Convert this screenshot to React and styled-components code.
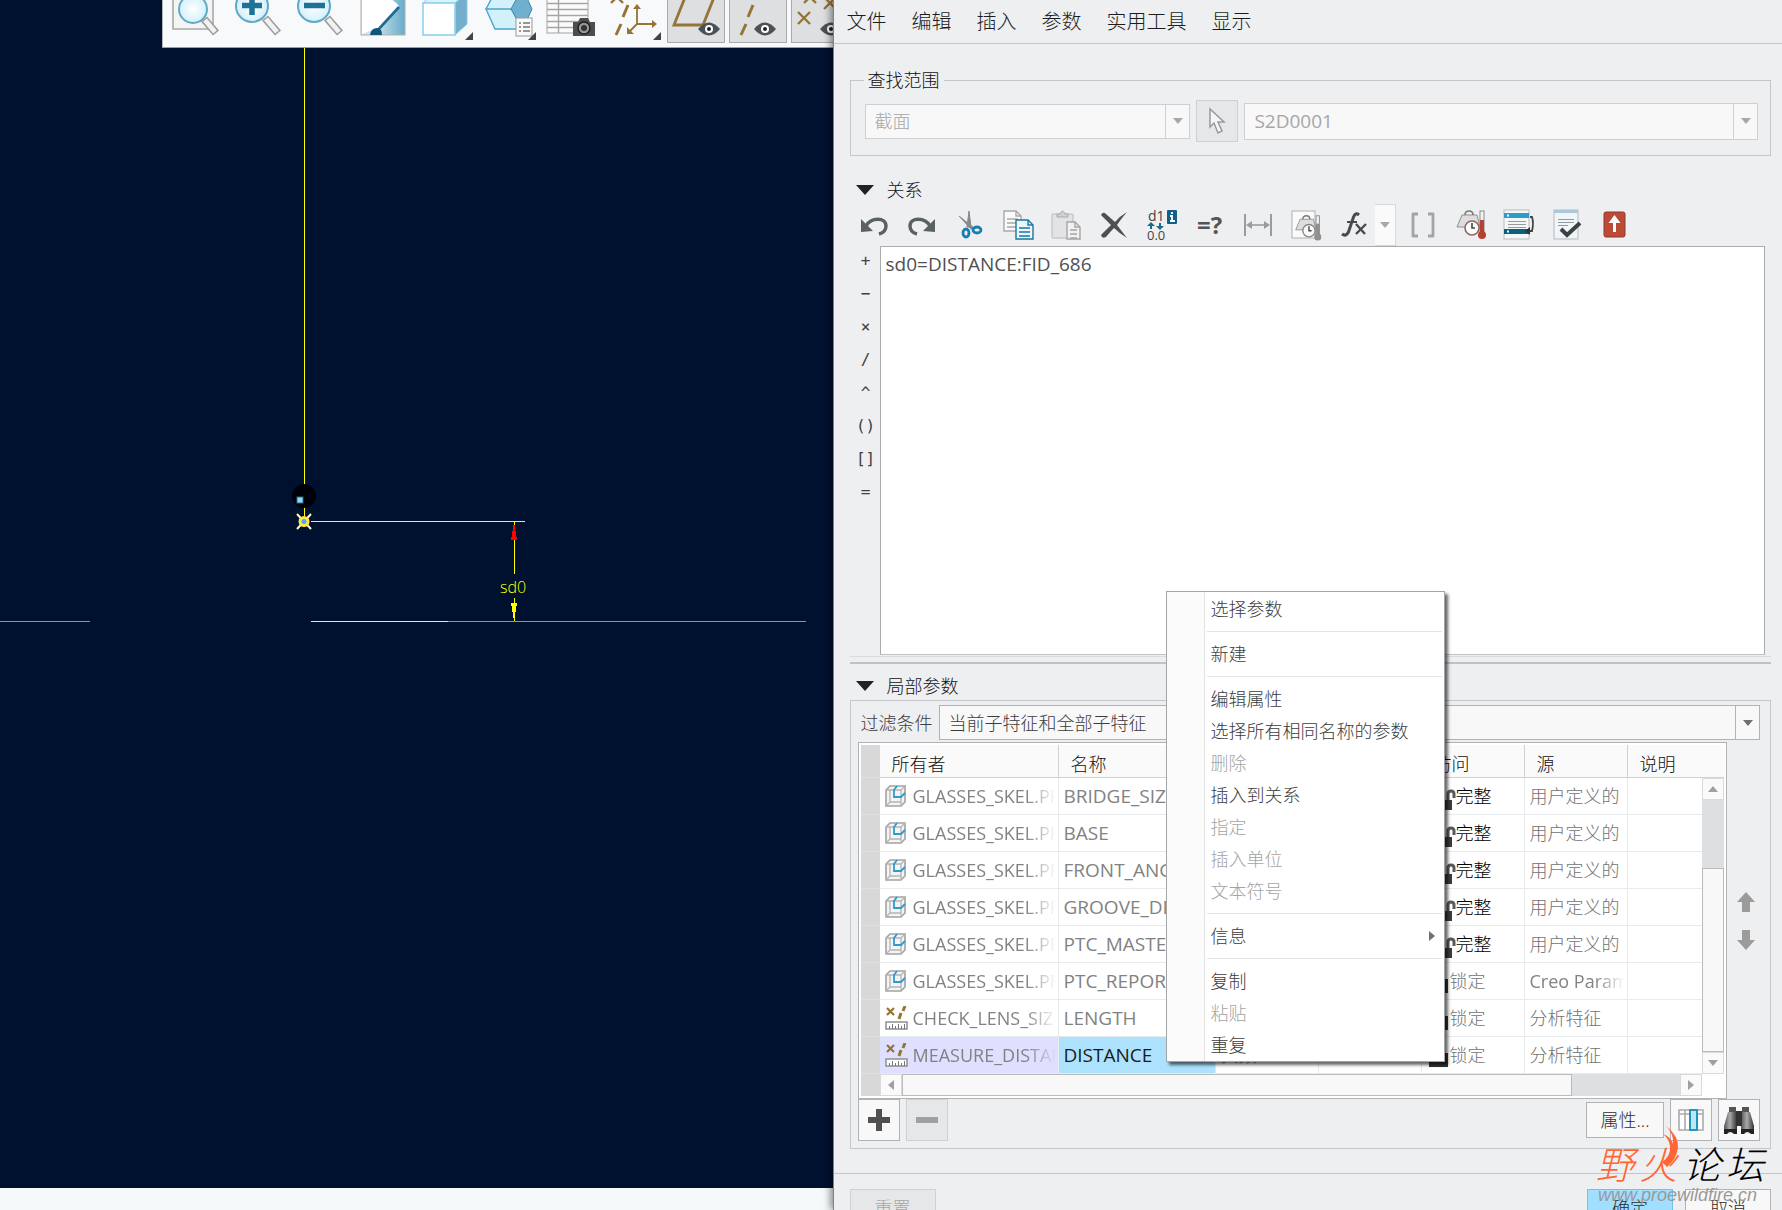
import React, { useState } from 'react';
import styled, { createGlobalStyle, css } from 'styled-components';

const sans = `"Open Sans", "Noto Sans CJK SC", sans-serif`;

const GlobalStyle = createGlobalStyle`
  * {
    box-sizing: border-box;
  }
  body {
    margin: 0;
    background: #eeeff1;
    font-family: ${sans};
    font-size: 18px;
    font-weight: 300;
    line-height: 24px;
    color: #111;
  }
  button, select, textarea {
    font: inherit;
    color: inherit;
    margin: 0;
  }
`;

const Page = styled.main`
  display: flex;
  height: 100vh;
  overflow: hidden;
`;

/* ---------- model view ---------- */

const ModelView = styled.section`
  flex: 833 1 0;
  min-width: 0;
  display: flex;
  flex-direction: column;
  background: #00112f;
`;

const ViewBar = styled.div`
  display: flex;
  gap: 4px;
  height: 48px;
  margin-left: 162px;
  padding-left: 8px;
  overflow: hidden;
  background: #f8f9fb;
  border-left: 1px solid #b4b6b8;
  border-bottom: 1px solid #9b9da0;
`;

const ViewButton = styled.button`
  flex: 0 0 58px;
  min-width: 0;
  height: 43px;
  padding: 0;
  border: 1px solid ${(p) => (p.$on ? '#a9abad' : 'transparent')};
  border-top: none;
  background: ${(p) => (p.$on ? '#dedfe1' : 'transparent')};

  svg {
    display: block;
    margin-left: -1px;
  }
`;

const Scene = styled.svg`
  flex: 1;
  width: 100%;
  min-height: 0;
  display: block;
`;

const StatusStrip = styled.div`
  height: 22px;
  background: #f5f9fa;
`;

/* ---------- dialog ---------- */

const Dialog = styled.section`
  position: relative;
  flex: 949 1 0;
  min-width: 0;
  display: flex;
  flex-direction: column;
  background: #eeeff1;
  border-left: 1px solid #7d828b;
  box-shadow: -2px 0 8px rgba(0, 0, 0, 0.5);
`;

const MenuBar = styled.nav`
  display: flex;
  gap: 25px;
  height: 44px;
  padding: 0 13px;
  border-bottom: 1px solid #c4c6c9;
`;

const MenuButton = styled.button`
  padding: 0;
  border: none;
  background: none;
  font-size: 20px;
  color: #1c1c1c;
`;

const Body = styled.div`
  flex: 1;
  min-height: 0;
  display: flex;
  flex-direction: column;
  padding: 24px 11px 24px 16px;
`;

const Scope = styled.fieldset`
  display: flex;
  align-items: center;
  gap: 6px;
  min-width: 0;
  margin: 0;
  padding: 8px 12px 13px 14px;
  border: 1px solid #c4c6c9;

  legend {
    margin-left: -1px;
    padding: 0 4px;
  }
`;

const Combo = styled.div`
  display: flex;
  flex: ${(p) => p.$grow || 1} 1 0;
  min-width: 0;
  height: ${(p) => (p.$tall ? 37 : 35)}px;
  background: #f8f8f8;
  border: 1px solid ${(p) => (p.$off ? '#cfd0d2' : '#b0b2b5')};
  color: ${(p) => (p.$off ? '#a6a6a6' : '#3c3c3c')};
  ${(p) => p.$latin && css`
    font-size: 19px;
    font-weight: 400;
  `}

  select {
    flex: 1;
    min-width: 0;
    padding: 0 9px;
    border: none;
    border-radius: 0;
    background: transparent;
    appearance: none;
    opacity: 1;
  }
`;

const ComboArrow = styled.span`
  display: flex;
  align-items: center;
  justify-content: center;
  width: 24px;
  border-left: 1px solid ${(p) => (p.$off ? '#cfd0d2' : '#b0b2b5')};
`;

const SquareButton = styled.button`
  display: flex;
  align-items: center;
  justify-content: center;
  flex: 0 0 42px;
  height: 42px;
  padding: 0;
  border: 1px solid ${(p) => (p.$off ? '#cfd0d2' : '#b0b2b5')};
  background: ${(p) => (p.$off ? '#e6e7e9' : '#f8f8f8')};
`;

const SectionTitle = styled.h2`
  display: flex;
  align-items: center;
  gap: 13px;
  margin: ${(p) => p.$top}px 0 2px;
  padding-left: 6px;
  font-size: 18px;
  font-weight: 300;
  line-height: 24px;
`;

const ToolBar = styled.div`
  display: flex;
  height: 42px;
`;

const ToolButton = styled.button`
  display: flex;
  align-items: center;
  justify-content: center;
  flex: 0 0 48px;
  padding: 0;
  border: none;
  background: none;
`;

const ToolArrow = styled(ToolButton)`
  flex-basis: 21px;
  margin: 0 3px 0 -3px;
  background: #fafafa;
  border: 1px solid #d5d9dd;
  border-left: none;
`;

const EditorRow = styled.div`
  flex: 1;
  min-height: 0;
  display: flex;
  padding-right: 6px;
`;

const Operators = styled.div`
  width: 30px;
  padding-left: 2px;
  display: flex;
  flex-direction: column;
`;

const OperatorButton = styled.button`
  height: 33px;
  padding: 0 0 4px;
  border: none;
  background: none;
  font-family: "DejaVu Sans Mono", monospace;
  font-size: 16px;
  line-height: 24px;
  color: #404040;
`;

const Editor = styled.textarea`
  flex: 1;
  min-width: 0;
  padding: 5px;
  border: 1px solid #a9abae;
  border-bottom-color: #c0c4c9;
  outline: none;
  resize: none;
  background: #fff;
  color: #505050;
  font-size: 19px;
  font-weight: 400;
`;

const Splitter = styled.hr`
  width: 100%;
  height: 8px;
  margin: 1px 0 0;
  border: none;
  border-top: 1px solid #d9dcdf;
  border-bottom: 2px solid #c0c2c4;
`;

const ParamBox = styled.div`
  display: flex;
  flex-direction: column;
  padding: 4px 10px 7px 7px;
  border: 1px solid #c4c6c9;
`;

const FilterRow = styled.div`
  display: flex;
  align-items: center;
  gap: 6px;
  padding-left: 3px;
  margin-bottom: 2px;
  color: #3c3c3c;
`;

const TableRow = styled.div`
  display: flex;
`;

const TableFrame = styled.div`
  flex: 1;
  min-width: 0;
  display: flex;
  padding: 2px;
  background: #fff;
  border: 1px solid #b0b2b5;
`;

const Grid = styled.div`
  flex: 1;
  min-width: 0;
`;

const Table = styled.table`
  width: 100%;
  table-layout: fixed;
  border-spacing: 0;

  th, td {
    padding: 0;
    overflow: hidden;
    white-space: nowrap;
    text-align: left;
    font-weight: 300;
  }
  th {
    height: 33px;
    padding: 5px 12px 0;
    background: #fafafa;
    border-right: 1px solid #d0d2d4;
    border-bottom: 1px solid #d0d2d4;
  }
  td {
    height: 37px;
    padding-left: 5px;
    border-right: 1px solid #e8ebee;
    border-bottom: 1px solid #e8ebee;
    color: #727272;
  }
  th:last-child, td:last-child {
    border-right: none;
  }
  th:first-child, td:first-child {
    background: #d8d8d8;
    border-right: none;
    border-color: #e0e0e0;
  }
`;

const Cell = styled.td`
  ${(p) => p.$tint && css`
    background: ${p.$tint};
  `}
`;

const CellBody = styled.div`
  display: flex;
  align-items: center;
  gap: ${(p) => p.$gap || 0}px;
  overflow: hidden;
  color: ${(p) => p.$color || 'inherit'};
  margin-right: 2px;
  ${(p) => p.$latin && css`
    color: ${p.$color || '#828282'};
    font-size: ${p.$latin}px;
    font-weight: 400;
  `}
  ${(p) => p.$fade && css`
    mask-image: linear-gradient(to right, #000 calc(100% - 30px), transparent);
  `}

  svg {
    flex: none;
  }
`;

const HBar = styled.div`
  display: flex;
  height: 22px;
  background: #dddfe1;
`;

const HHandle = styled.div`
  width: 19px;
  background: #d8d8d8;
`;

const ScrollButton = styled.button`
  display: flex;
  align-items: center;
  justify-content: center;
  flex: 0 0 22px;
  padding: 0;
  border: 1px solid #d8dadc;
  background: #fafafa;
`;

const Thumb = styled.div`
  flex: ${(p) => p.$size} 1 0;
  background: #f8f8f8;
  border: 1px solid #b8babc;
`;

const Track = styled.div`
  flex: ${(p) => p.$size} 1 0;
`;

const VSide = styled.div`
  display: flex;
  flex-direction: column;
  width: 22px;
`;

const VHead = styled.div`
  height: 33px;
  background: #fafafa;
  border-bottom: 1px solid #d0d2d4;
`;

const VBar = styled.div`
  display: flex;
  flex-direction: column;
  height: 296px;
  background: #dddfe1;
`;

const Movers = styled.div`
  display: flex;
  flex-direction: column;
  align-items: center;
  justify-content: center;
  gap: 18px;
  width: 33px;
  padding-left: 4px;
`;

const MoveButton = styled.button`
  display: block;
  padding: 0;
  border: none;
  background: none;
  line-height: 0;
`;

const ActionRow = styled.div`
  display: flex;
  align-items: center;
  gap: 6px;
`;

const PushButton = styled.button`
  width: 86px;
  height: 38px;
  padding: 0;
  border: 1px solid ${(p) => (p.$main ? '#6cc4ec' : p.$off ? '#cfd0d2' : '#b0b2b5')};
  background: ${(p) => (p.$main ? '#a0dfff' : p.$off ? '#e6e7e9' : '#f8f8f8')};
  color: ${(p) => (p.$off ? '#a6a6a6' : '#2c2c2c')};
`;

const PropsButton = styled(PushButton)`
  width: 78px;
  height: 36px;
  margin-left: auto;
`;

const Footer = styled.footer`
  flex: none;
  display: flex;
  gap: 12px;
  height: 37px;
  padding: 15px 11px 0 16px;
  overflow: hidden;
  border-top: 1px solid #c4c6c9;

  ${PushButton}:first-child {
    margin-right: auto;
  }
`;

/* ---------- popup menu ---------- */

const Popup = styled.ul`
  position: absolute;
  left: 332px;
  top: 591px;
  width: 279px;
  margin: 0;
  padding: 1px 0 0;
  list-style: none;
  border: 1px solid #a4a6a8;
  background: linear-gradient(to right, #fbfbfb 37px, #e2e2e2 37px, #e2e2e2 38px, #fff 38px);
  box-shadow: 3px 3px 3px rgba(0, 0, 0, 0.6);
`;

const PopupButton = styled.button`
  display: flex;
  align-items: center;
  justify-content: space-between;
  width: 100%;
  height: 32px;
  padding: 0 9px 0 44px;
  border: none;
  background: none;
  color: ${(p) => (p.disabled ? '#a4a4a4' : '#3c3c3c')};
`;

const PopupLine = styled.li`
  height: 1px;
  margin: 6px 2px 6px 40px;
  background: #e2e4e6;
`;

const Watermark = styled.div`
  position: absolute;
  right: 18px;
  bottom: 5px;
  width: 168px;
  pointer-events: none;
  font-style: italic;
  font-family: "Liberation Sans", "Noto Sans CJK SC", sans-serif;

  svg {
    position: absolute;
    left: 66px;
    top: -21px;
  }
`;

const MarkName = styled.div`
  display: flex;
  justify-content: space-between;
  font-size: 38px;
  line-height: 38px;
  color: #000;
`;

const MarkUrl = styled.div`
  padding-left: 2px;
  font-size: 18px;
  line-height: 20px;
  font-weight: 400;
  color: #9a9a9a;
`;

const Orange = styled.span`
  color: #ff6633;
`;

/* ---------- drawings ---------- */

const Caret = ({ dir = 'down', color = '#707070', w = 10, h = 6 }) => {
  const shapes = {
    down: `0,0 ${w},0 ${w / 2},${h}`,
    up: `0,${h} ${w},${h} ${w / 2},0`,
    left: `${h},0 ${h},${w} 0,${w / 2}`,
    right: `0,0 0,${w} ${h},${w / 2}`,
  };
  const flat = dir === 'down' || dir === 'up';
  return (
    <svg width={flat ? w : h} height={flat ? h : w} aria-hidden="true">
      <polygon points={shapes[dir]} fill={color} />
    </svg>
  );
};

const Lens = ({ x, y, r }) => (
  <>
    <path d={`M${x + r - 3} ${y + r - 4} L45 33`} stroke="#9b9b9b" strokeWidth="8" />
    <path d={`M${x + r - 2} ${y + r - 3} L44 32`} stroke="#f1f1f1" strokeWidth="5" />
    <circle cx={x} cy={y} r={r} fill="url(#lens)" stroke="#5fa9c6" strokeWidth="2" />
  </>
);

const Corner = ({ x }) => <path d={`M${x} 40 h8 v-8 z`} fill="#444" />;

const Eye = ({ x }) => (
  <g>
    <path d={`M${x - 11} 29 q11 -13 22 0 q-11 13 -22 0z`} fill="#4b5255" />
    <circle cx={x} cy="29" r="4" fill="#fff" />
    <circle cx={x} cy="29" r="2" fill="#222" />
  </g>
);

const Cross = ({ x, y, s = 6 }) => (
  <path
    d={`M${x - s} ${y - s} l${2 * s} ${2 * s} M${x + s} ${y - s} l${-2 * s} ${2 * s}`}
    stroke="#957436"
    strokeWidth="2.4"
  />
);

const viewIcons = [
  {
    name: '重新调整',
    art: (
      <>
        <path d="M2 -4 H42 V29 H2z" fill="#f4f4f5" stroke="#a8a8a8" strokeWidth="1.6" />
        <Lens x={22} y={9} r={14} />
      </>
    ),
  },
  {
    name: '放大',
    art: (
      <>
        <Lens x={19} y={6} r={16} />
        <path d="M9 5.5 H29 M19 -4 V15" stroke="#1c7397" strokeWidth="5.5" />
      </>
    ),
  },
  {
    name: '缩小',
    art: (
      <>
        <Lens x={19} y={6} r={16} />
        <path d="M9 5.5 H30" stroke="#1c7397" strokeWidth="5.5" />
      </>
    ),
  },
  {
    name: '重画',
    art: (
      <>
        <rect x="4" y="-6" width="44" height="41" fill="url(#paint)" stroke="#b0b0b0" />
        <path d="M5 -6 H18 Q34 -4 42 6 L20 30 H15 L5 34z" fill="#fff" />
        <path d="M42 7 L20 31" stroke="#1d6d92" strokeWidth="2.6" />
        <path d="M13 35 q1 -7 7 -7 q5 0 5 7z" fill="#115577" />
      </>
    ),
  },
  {
    name: '显示样式',
    art: (
      <>
        <path d="M4 3 L14 -6 H48 L36 3z" fill="#d9f2fb" stroke="#7fcdea" />
        <path d="M36 3 L48 -6 V24 L36 35z" fill="#74aecb" stroke="#7fcdea" />
        <rect x="4" y="3" width="32" height="32" fill="#fff" stroke="#8ed3ee" strokeWidth="1.6" />
        <Corner x={46} />
      </>
    ),
  },
  {
    name: '已保存方向',
    art: (
      <>
        <path d="M5 9 L14 -8 H40 L32 9z M5 9 H32 L40 29 H14z" fill="#d3f1fc" stroke="#4da5c9" strokeWidth="1.4" />
        <path d="M30 9 L36 -2 H46 L51 9 L46 20 H36z" fill="#6fb0ce" stroke="#3a87ad" />
        <rect x="35" y="18" width="16" height="18" fill="#fafafa" stroke="#999" />
        <path d="M38 23 h2 m2 0 h7 M38 27 h2 m2 0 h7 M38 31 h2 m2 0 h7" stroke="#777" strokeWidth="1.3" />
        <Corner x={47} />
      </>
    ),
  },
  {
    name: '视图管理器',
    art: (
      <>
        <rect x="4" y="-6" width="41" height="39" fill="#fbfbfb" stroke="#a5a5a5" />
        <path d="M4 3.5 H45 M4 9.5 H45 M4 15.5 H45 M4 21.5 H45 M4 27.5 H45 M15.5 -6 V33" stroke="#a5a5a5" strokeWidth="1.4" />
        <path d="M30 22 h5 l2 -4 h8 l2 4 h5 v14 h-22z" fill="#4d4d4d" />
        <circle cx="41" cy="28" r="6" fill="#999" stroke="#222" strokeWidth="1.6" />
        <circle cx="41" cy="28" r="3" fill="#333" />
      </>
    ),
  },
  {
    name: '基准显示过滤器',
    art: (
      <>
        <Cross x={12} y={-3} />
        <path d="M23 5 L18 17 M16 24 L11 35" stroke="#957436" strokeWidth="3" />
        <path d="M32 6 V24 H50 M32 24 L23 33" fill="none" stroke="#957436" strokeWidth="1.8" />
        <path d="M28 9 L32 4 L36 9z M47 20 L52 24 L47 28z M22 27 V34 H29z" fill="#957436" />
        <Corner x={48} />
      </>
    ),
  },
  {
    name: '平面显示',
    on: true,
    art: (
      <>
        <path d="M19 -5 L7 25 H36 L48 -5" fill="none" stroke="#957436" strokeWidth="2.8" />
        <Eye x={42} />
      </>
    ),
  },
  {
    name: '轴显示',
    on: true,
    art: (
      <>
        <path d="M24 5 L19 17 M17 24 L12 35" stroke="#957436" strokeWidth="3" />
        <Eye x={36} />
      </>
    ),
  },
  {
    name: '点显示',
    on: true,
    art: (
      <>
        <Cross x={13} y={18} />
        <Cross x={19} y={-3} />
        <Cross x={39} y={3} />
        <Eye x={40} />
      </>
    ),
  },
];

const Defs = () => (
  <svg width="0" height="0" style={{ position: 'absolute' }} aria-hidden="true">
    <defs>
      <radialGradient id="lens">
        <stop offset="0" stopColor="#fff" />
        <stop offset="1" stopColor="#d3f0fa" />
      </radialGradient>
      <linearGradient id="paint" x1="0" y1="0" x2="1" y2="0">
        <stop offset="0.3" stopColor="#cfe6ef" />
        <stop offset="1" stopColor="#67abc8" />
      </linearGradient>
      <linearGradient id="metal" x1="0" y1="0" x2="1" y2="0">
        <stop offset="0" stopColor="#555" />
        <stop offset="0.45" stopColor="#aaa" />
        <stop offset="1" stopColor="#333" />
      </linearGradient>
    </defs>
  </svg>
);

const Sheet = ({ x, y, w, h, fill, line }) => (
  <g stroke={line} strokeWidth="1.4">
    <path d={`M${x} ${y} h${w - 5} l5 5 v${h - 5} h${-w}z`} fill={fill} />
    <path d={`M${x + w - 5} ${y} v5 h5`} fill="none" />
    <path d={`M${x + 3} ${y + 8} h${w - 6} m${6 - w} 4 h${w - 6} m${6 - w} 4 h${w - 6}`} fill="none" />
  </g>
);

const Scale = ({ dial, bulb, edge }) => (
  <g>
    <path d="M2 18 L7 6 H22 L25 18z" fill="#dcdedf" stroke="#8d8f91" />
    <path d="M10 6 q0 -4 4 -4 q4 0 4 4" fill="none" stroke="#777" strokeWidth="1.6" />
    <rect x="25" y="2" width="4" height="22" fill={edge} stroke="#8a8a8a" />
    <rect x="25" y="11" width="4" height="14" fill={bulb} />
    <circle cx="27" cy="26" r="4" fill={bulb} />
    <circle cx="17" cy="19" r="7" fill="#fbfbfb" stroke={dial} strokeWidth="1.6" />
    <path d="M17 14 V19 H20" fill="none" stroke="#444" strokeWidth="1.6" />
  </g>
);

const toolIcons = {
  undo: (
    <>
      <path d="M8 17 C13 8 28 8 28 17 C28 21 25 24 21 25" fill="none" stroke="#5a6164" strokeWidth="3.4" />
      <path d="M3 10 V23 L15 22z" fill="#5a6164" />
    </>
  ),
  redo: (
    <>
      <path d="M24 17 C19 8 4 8 4 17 C4 21 7 24 11 25" fill="none" stroke="#5a6164" strokeWidth="3.4" />
      <path d="M29 10 V23 L17 22z" fill="#5a6164" />
    </>
  ),
  cut: (
    <>
      <path d="M5 7 L20 19 L17 20z M15 2 L17 18 L13 18z" fill="#888" stroke="#888" />
      <ellipse cx="12" cy="24" rx="3" ry="4" fill="none" stroke="#1a7fb0" strokeWidth="2.8" />
      <ellipse cx="23" cy="21" rx="4" ry="3" fill="none" stroke="#1a7fb0" strokeWidth="2.8" />
    </>
  ),
  copy: (
    <>
      <Sheet x={2} y={2} w={17} h={20} fill="#fafafa" line="#a9a9a9" />
      <Sheet x={14} y={11} w={17} h={19} fill="#edf7fb" line="#1478a3" />
    </>
  ),
  paste: (
    <>
      <rect x="2" y="5" width="21" height="24" rx="1" fill="#e2e3e4" stroke="#b9babb" />
      <path d="M7 8 V5 H10 Q12.500 -1 15 5 H18 V8z" fill="#d0d1d2" stroke="#aaa" />
      <Sheet x={17} y={13} w={13} h={17} fill="#f1f1f1" line="#a5a5a5" />
    </>
  ),
  remove: (
    <path
      d="M3 6 Q5 2 8 5 L17 13 Q22 7 29 3 Q23 10 19 16 L29 29 Q21 24 16 19 Q12 23 8 28 Q4 30 3 26 Q8 21 13 16 Z"
      fill="#505050"
    />
  ),
  switchDim: (
    <>
      <text x="2" y="12" fontSize="14" fontWeight="400" fill="#444">d1</text>
      <text x="1" y="31" fontSize="13" fontWeight="400" fill="#444">0.0</text>
      <path d="M5 14 v6 M14 14 v6" stroke="#1a6a90" strokeWidth="2" />
      <path d="M1 17 l4 -4 l4 4z M10 17 l4 4 l4 -4z" fill="#1a6a90" />
      <rect x="21" y="1" width="10" height="14" rx="1" fill="#135f86" />
      <path d="M26 3 v2 M24 7 h2 v5 M24 12 h5" fill="none" stroke="#fff" strokeWidth="1.8" />
    </>
  ),
  evaluate: (
    <text x="3" y="25" fontSize="24" fontWeight="700" fill="#555">=?</text>
  ),
  dimension: (
    <>
      <path d="M3 5 V27 M29 5 V27" stroke="#9a9c9e" strokeWidth="2" />
      <path d="M6 16 H26" stroke="#9a9c9e" strokeWidth="1.6" />
      <path d="M4 16 l6 -4 v8z M28 16 l-6 -4 v8z" fill="#9a9c9e" />
    </>
  ),
  units: (
    <>
      <rect x="2" y="2" width="23" height="27" fill="#fafafa" stroke="#b0b0b0" />
      <g transform="translate(4 5) scale(0.880)">
        <Scale dial="#888" bulb="#909090" edge="#eee" />
      </g>
    </>
  ),
  fx: (
    <g fill="none" stroke="#4a4a4a">
      <path d="M4 25 Q8 28 10.500 23 L15.500 8 Q17.500 3 21 6" strokeWidth="3" />
      <path d="M9 13 H19" strokeWidth="2" />
      <path d="M18 15 L27 25 M28 15 L18 25" strokeWidth="2.4" />
    </g>
  ),
  brackets: (
    <path d="M11 5 H6 V27 H11 M21 5 H26 V27 H21" fill="none" stroke="#a2a4a5" strokeWidth="2.8" strokeLinejoin="round" />
  ),
  unitSense: <Scale dial="#8c6a5c" bulb="#b8402f" edge="#f3f3f3" />,
  order: (
    <>
      <rect x="1" y="1" width="25" height="29" fill="#f3f7f8" stroke="#bcbcbc" />
      <rect x="1" y="4" width="25" height="5" fill="#2c9cc8" />
      <rect x="1" y="20" width="25" height="5" fill="#0d5f80" />
      <path d="M4 6.500 h2 M4 22.500 h2" stroke="#fff" strokeWidth="2" />
      <path d="M5 12.500 H23 M5 15.500 H23 M5 18.500 H23" stroke="#999" />
      <path d="M27 8 h2 q2 6 0 14 h-5" fill="none" stroke="#444" strokeWidth="1.8" />
      <path d="M22 22 l5 -4 v8z" fill="#333" />
    </>
  ),
  verify: (
    <>
      <rect x="3" y="1" width="24" height="29" fill="#eff6f9" stroke="#b5b9bb" />
      <rect x="3" y="1" width="24" height="3" fill="#abc9d8" />
      <path d="M7 10.500 H23 M7 13.500 H23 M7 16.500 H17" stroke="#999" />
      <path d="M10 20 L16 26 L29 14" fill="none" stroke="#404040" strokeWidth="4" />
    </>
  ),
  exit: (
    <>
      <rect x="5" y="3" width="21" height="25" rx="2" fill="#bb4b36" stroke="#973524" />
      <path d="M15.500 23 V12" stroke="#fff" strokeWidth="3" />
      <path d="M9.500 14 L15.500 6 L21.500 14z" fill="#fff" />
    </>
  ),
};

const tools = [
  ['undo', '撤消'],
  ['redo', '重做'],
  ['cut', '剪切'],
  ['copy', '复制'],
  ['paste', '粘贴'],
  ['remove', '删除'],
  ['switchDim', '切换尺寸'],
  ['evaluate', '计算'],
  ['dimension', '指定尺寸'],
  ['units', '单位'],
  ['fx', '插入函数'],
  ['brackets', '插入单位'],
  ['unitSense', '单位敏感'],
  ['order', '排序关系'],
  ['verify', '校验关系'],
  ['exit', '退出'],
];

const PartIcon = () => (
  <svg width="23" height="22" aria-hidden="true">
    <path d="M1 5 L5 1 H20 V17 L16 21 H1z" fill="#f4f4f4" stroke="#a2a2a2" strokeWidth="1.6" />
    <path d="M1 5 H16 V21 M16 5 L20 1 M5 5 V17 H16 M5 17 L1 21" fill="none" stroke="#b4b4b4" strokeWidth="1.3" />
    <path d="M12 1 L9 5 V12 H16 L20 8" fill="none" stroke="#2d9ccb" strokeWidth="1.8" />
  </svg>
);

const MeasureIcon = () => (
  <svg width="23" height="24" aria-hidden="true">
    <path d="M2 2 l7 7 M9 2 l-7 7" stroke="#957436" strokeWidth="2.2" />
    <path d="M20 0 l-2 5 M16 7 l-2 6" stroke="#957436" strokeWidth="3" />
    <rect x="1" y="16" width="21" height="7" fill="#fff" stroke="#888" strokeWidth="1.4" />
    <path d="M4.500 23 v-3 M7.500 23 v-5 M10.500 23 v-3 M13.500 23 v-5 M16.500 23 v-3 M19.500 23 v-5" stroke="#777" />
  </svg>
);

const LockIcon = ({ open }) =>
  open ? (
    <svg width="29" height="28" aria-hidden="true">
      <rect x="7" y="18" width="18" height="10" fill="#3c3c3c" />
      <path d="M21 18 V12 Q21 9 24 9 Q27 9 27 12 V16" fill="none" stroke="#5a5a5a" strokeWidth="3" />
    </svg>
  ) : (
    <svg width="23" height="24" aria-hidden="true">
      <path d="M6 11 V6 Q6 3 10 3 Q14 3 14 6 V11" fill="none" stroke="#333" strokeWidth="3" />
      <rect x="2" y="10" width="19" height="14" fill="#333" />
    </svg>
  );

const BlockArrow = ({ down }) => (
  <svg width="18" height="20" aria-hidden="true">
    <path
      d={down ? 'M5 0 H13 V10 H18 L9 20 L0 10 H5z' : 'M5 20 H13 V10 H18 L9 0 L0 10 H5z'}
      fill="#9b9b9b"
    />
  </svg>
);

/* ---------- data ---------- */

const menus = ['文件', '编辑', '插入', '参数', '实用工具', '显示'];
const operators = ['+', '−', '×', '/', '^', '()', '[]', '='];

const rows = [
  { owner: 'GLASSES_SKEL.PRT', name: 'BRIDGE_SIZE', open: true, source: '用户定义的' },
  { owner: 'GLASSES_SKEL.PRT', name: 'BASE', open: true, source: '用户定义的' },
  { owner: 'GLASSES_SKEL.PRT', name: 'FRONT_ANGLE', open: true, source: '用户定义的' },
  { owner: 'GLASSES_SKEL.PRT', name: 'GROOVE_DEPTH', open: true, source: '用户定义的' },
  { owner: 'GLASSES_SKEL.PRT', name: 'PTC_MASTER', open: true, source: '用户定义的' },
  { owner: 'GLASSES_SKEL.PRT', name: 'PTC_REPORT', source: 'Creo Parametric' },
  { owner: 'CHECK_LENS_SIZE', name: 'LENGTH', measure: true, source: '分析特征' },
  { owner: 'MEASURE_DISTANCE', name: 'DISTANCE', type: '实数', value: '17.26786', measure: true, source: '分析特征' },
];

const popupItems = [
  { label: '选择参数' },
  null,
  { label: '新建' },
  null,
  { label: '编辑属性' },
  { label: '选择所有相同名称的参数' },
  { label: '删除', disabled: true },
  { label: '插入到关系' },
  { label: '指定', disabled: true },
  { label: '插入单位', disabled: true },
  { label: '文本符号', disabled: true },
  null,
  { label: '信息', more: true },
  null,
  { label: '复制' },
  { label: '粘贴', disabled: true },
  { label: '重复' },
];

const Sketch = () => (
  <Scene aria-label="草绘">
    <g shapeRendering="crispEdges" strokeWidth="1" fill="none">
      <path d="M304.500 0 V468" stroke="#ff0" />
      <path d="M311 473.500 H525 M514.500 474 V526 M514.500 550 V573 M311 573.500 H448" stroke="#ff0" />
      <path d="M0 573.500 H90 M448 573.500 H806" stroke="#f07818" />
    </g>
    <circle cx="304" cy="448" r="12" fill="#000008" />
    <rect x="297" y="449" width="6" height="6" fill="#8fdcf5" stroke="#2a6a86" />
    <path d="M297 466 l14 15 M311 466 l-14 15" stroke="#ffffc0" strokeWidth="2" />
    <circle cx="304" cy="473.500" r="4" fill="#4fa8ff" stroke="#ffe640" strokeWidth="3" />
    <path d="M513 477 h2 v6 h1 v6 h1 v3 h-6 v-3 h1 v-6 h1z" fill="#f00" />
    <path d="M511 555 h6 v3 h-1 v6 h-1 v6 h-2 v-6 h-1 v-6 h-1z" fill="#ff0" />
    <text x="500" y="545" fill="#ff0" fontSize="16">sd0</text>
  </Scene>
);

const ParamTable = () => (
  <Table>
    <colgroup>
      <col width="19" />
      <col width="179" />
      <col width="157" />
      <col width="103" />
      <col width="103" />
      <col width="103" />
      <col width="103" />
      <col />
    </colgroup>
    <thead>
      <tr>
        <th />
        <th>所有者</th>
        <th>名称</th>
        <th />
        <th />
        <th>访问</th>
        <th>源</th>
        <th>说明</th>
      </tr>
    </thead>
    <tbody>
      {rows.map((row, i) => {
        const selected = i === rows.length - 1;
        const latinSource = row.source.startsWith('Creo');
        return (
          <tr key={i}>
            <td />
            <Cell $tint={selected && '#dfdfff'}>
              <CellBody $gap={5} $latin={18} $fade>
                {row.measure ? <MeasureIcon /> : <PartIcon />}
                {row.owner}
              </CellBody>
            </Cell>
            <Cell $tint={selected && '#ade2ff'}>
              <CellBody $latin={19} $color={selected && '#1a1a1a'}>{row.name}</CellBody>
            </Cell>
            <td>{row.type}</td>
            <td>{row.value}</td>
            <td>
              <CellBody $color={row.open && '#000'}>
                <LockIcon open={row.open} />
                {row.open ? '完整' : '锁定'}
              </CellBody>
            </td>
            <td>
              <CellBody $latin={latinSource && 18} $fade={latinSource}>{row.source}</CellBody>
            </td>
            <td />
          </tr>
        );
      })}
    </tbody>
  </Table>
);

const App = () => {
  const [relation, setRelation] = useState('sd0=DISTANCE:FID_686');

  return (
    <Page>
      <GlobalStyle />
      <Defs />
      <ModelView>
        <ViewBar>
          {viewIcons.map((icon) => (
            <ViewButton key={icon.name} type="button" aria-label={icon.name} $on={icon.on}>
              <svg width="58" height="43">{icon.art}</svg>
            </ViewButton>
          ))}
        </ViewBar>
        <Sketch />
        <StatusStrip />
      </ModelView>

      <Dialog>
        <MenuBar>
          {menus.map((m) => (
            <MenuButton key={m} type="button">{m}</MenuButton>
          ))}
        </MenuBar>

        <Body>
          <Scope>
            <legend>查找范围</legend>
            <Combo $off $grow={326}>
              <select disabled aria-label="对象类型">
                <option>截面</option>
              </select>
              <ComboArrow $off><Caret color="#a8a8a8" /></ComboArrow>
            </Combo>
            <SquareButton type="button" disabled $off aria-label="选择">
              <svg width="18" height="28">
                <path d="M2 2 V20 L6 16 L10 26 L14 24 L10 15 H16z" fill="#f6f6f6" stroke="#9a9a9a" strokeWidth="1.5" />
              </svg>
            </SquareButton>
            <Combo $off $tall $latin $grow={515}>
              <select disabled aria-label="对象名称">
                <option>S2D0001</option>
              </select>
              <ComboArrow $off><Caret color="#a8a8a8" /></ComboArrow>
            </Combo>
          </Scope>

          <SectionTitle $top={22}>
            <Caret color="#222" w={18} h={10} />
            关系
          </SectionTitle>
          <ToolBar>
            {tools.map(([id, label]) => (
              <React.Fragment key={id}>
                <ToolButton type="button" aria-label={label}>
                  <svg width="32" height="32">{toolIcons[id]}</svg>
                </ToolButton>
                {id === 'fx' && (
                  <ToolArrow type="button" aria-label="函数列表">
                    <Caret color="#a8a8a8" />
                  </ToolArrow>
                )}
              </React.Fragment>
            ))}
          </ToolBar>
          <EditorRow>
            <Operators>
              {operators.map((op) => (
                <OperatorButton key={op} type="button">{op}</OperatorButton>
              ))}
            </Operators>
            <Editor
              aria-label="关系"
              spellCheck={false}
              value={relation}
              onChange={(e) => setRelation(e.target.value)}
            />
          </EditorRow>
          <Splitter />

          <SectionTitle $top={10}>
            <Caret color="#222" w={18} h={10} />
            局部参数
          </SectionTitle>
          <ParamBox>
            <FilterRow>
              <label htmlFor="filter">过滤条件</label>
              <Combo>
                <select id="filter">
                  <option>当前子特征和全部子特征</option>
                </select>
                <ComboArrow><Caret /></ComboArrow>
              </Combo>
            </FilterRow>
            <TableRow>
              <TableFrame>
                <Grid>
                  <ParamTable />
                  <HBar>
                    <HHandle />
                    <ScrollButton type="button" aria-label="向左"><Caret dir="left" color="#a0a0a0" /></ScrollButton>
                    <Thumb $size={670} />
                    <Track $size={108} />
                    <ScrollButton type="button" aria-label="向右"><Caret dir="right" color="#a0a0a0" /></ScrollButton>
                  </HBar>
                </Grid>
                <VSide>
                  <VHead />
                  <VBar>
                    <ScrollButton type="button" aria-label="向上"><Caret dir="up" color="#a0a0a0" /></ScrollButton>
                    <Track $size={69} />
                    <Thumb $size={183} />
                    <ScrollButton type="button" aria-label="向下"><Caret color="#a0a0a0" /></ScrollButton>
                  </VBar>
                </VSide>
              </TableFrame>
              <Movers>
                <MoveButton type="button" aria-label="上移"><BlockArrow /></MoveButton>
                <MoveButton type="button" aria-label="下移"><BlockArrow down /></MoveButton>
              </Movers>
            </TableRow>
            <ActionRow>
              <SquareButton type="button" aria-label="添加">
                <svg width="22" height="22"><path d="M0 11 H22 M11 0 V22" stroke="#505050" strokeWidth="6" /></svg>
              </SquareButton>
              <SquareButton type="button" disabled $off aria-label="移除">
                <svg width="22" height="22"><path d="M0 11 H22" stroke="#a0a0a0" strokeWidth="6" /></svg>
              </SquareButton>
              <PropsButton type="button">属性...</PropsButton>
              <SquareButton type="button" aria-label="列">
                <svg width="26" height="24">
                  <path d="M1 2 H25 V22 H1z M1 6 H25 M7 2 V22 M19 2 V22" fill="#fff" stroke="#aaa" strokeWidth="1.6" />
                  <rect x="12" y="2" width="7" height="20" fill="#bfe6f5" stroke="#2294c0" strokeWidth="2" />
                </svg>
              </SquareButton>
              <SquareButton type="button" aria-label="查找">
                <svg width="30" height="28">
                  <path d="M5 1 h7 v5 h-7z M18 1 h7 v5 h-7z" fill="#555" />
                  <path d="M4 6 H13 V27 H0 V20z" fill="url(#metal)" />
                  <path d="M17 6 H26 L30 20 V27 H17z" fill="url(#metal)" />
                  <rect x="12" y="5" width="6" height="15" fill="#333" />
                  <path d="M0 23 H13 V28 H0z M17 23 H30 V28 H17z" fill="#222" />
                  <path d="M3 28 q3 -4 7 0z M20 28 q3 -4 7 0z" fill="#eee" />
                </svg>
              </SquareButton>
            </ActionRow>
          </ParamBox>
        </Body>

        <Footer>
          <PushButton type="button" disabled $off>重置</PushButton>
          <PushButton type="button" $main>确定</PushButton>
          <PushButton type="button">取消</PushButton>
        </Footer>

        <Popup>
          {popupItems.map((item, i) =>
            item ? (
              <li key={i}>
                <PopupButton type="button" disabled={item.disabled}>
                  {item.label}
                  {item.more && <Caret dir="right" />}
                </PopupButton>
              </li>
            ) : (
              <PopupLine key={i} role="separator" />
            )
          )}
        </Popup>

        <Watermark>
          <MarkName>
            <Orange>野</Orange>
            <Orange>火</Orange>
            <span>论</span>
            <span>坛</span>
          </MarkName>
          <MarkUrl>www.proewildfire.cn</MarkUrl>
          <svg width="18" height="44" aria-hidden="true">
            <path d="M4 0 Q17 10 16 22 Q14 34 5 41 L0 36 Q9 30 8 20 Q7 13 1 8 Q9 11 11 18 Q12 8 4 0z" fill="#ff6633" />
          </svg>
        </Watermark>
      </Dialog>
    </Page>
  );
};

export default App;
